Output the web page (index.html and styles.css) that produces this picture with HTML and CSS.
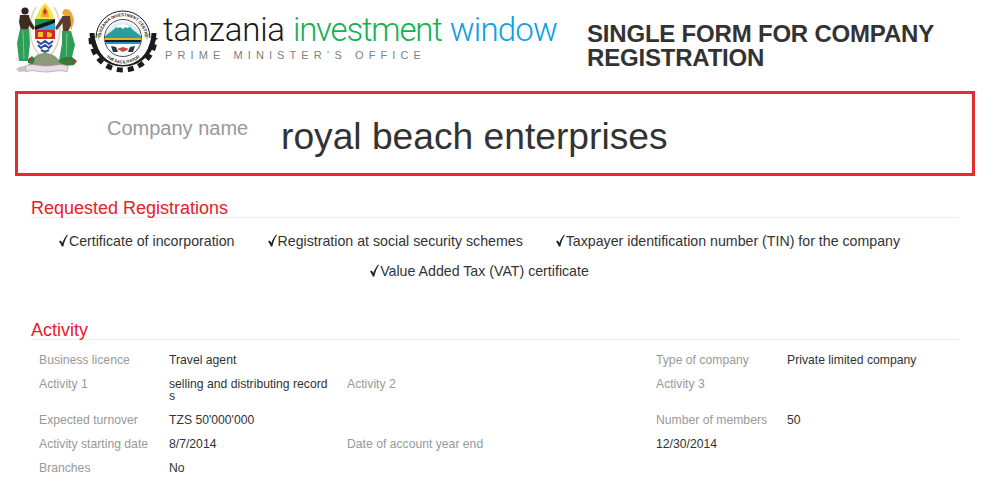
FILE: index.html
```html
<!DOCTYPE html>
<html lang="en">
<head>
  <meta charset="UTF-8">
  <title>Single form for company registration</title>
  <link rel="stylesheet" href="styles.css">
</head>
<body>

  <!--header-->
  <div class="header">
    <svg class="arms" width="65" height="72" viewBox="0 0 65 72">
      <!-- tusks -->
      <path d="M21 6C12 20 13 42 25 55" fill="none" stroke="#d9d4b8" stroke-width="1.4"/>
      <path d="M39 6C48 20 47 42 35 55" fill="none" stroke="#d9d4b8" stroke-width="1.4"/>
      <!-- shield -->
      <path d="M30 2C24 8 20 15 20 26V34C20 42 25 48 30 54C35 48 40 42 40 34V26C40 15 36 8 30 2Z" fill="#f3e63f"/>
      <path d="M26 16l1-6 3-5 3 5 1 6z" fill="#e9a92a"/>
      <path d="M28 11l2-4 2 4-2 3z" fill="#c9342b"/>
      <path d="M20 18H40V19L20 26Z" fill="#169a4c"/>
      <path d="M20 25L40 18V22L20 30Z" fill="#15181a"/>
      <path d="M20 29L40 22V29H20Z" fill="#2aa7df"/>
      <path d="M20 29H40V38H20Z" fill="#d9262c"/>
      <path d="M23 31h5v5h-5zM32 31c3 0 5 1 5 3s-3 3-5 2z" fill="#ecc42a"/>
      <path d="M20.500 38H39.500C38 45 34 50 30 54C26 50 22 45 20.500 38Z" fill="#fff"/>
      <path d="M22 40l4 3 4-3 4 3 4-3M23 44l3 3 4-3 4 3 3-3M26 49l4 2 4-2" fill="none" stroke="#2a4ea8" stroke-width="2"/>
      <!-- man -->
      <circle cx="10" cy="10" r="3.6" fill="#2f241c"/>
      <path d="M5 14H14L15 20L13 30H6L4 21Z" fill="#3f2c21"/>
      <path d="M13 15L20 27L18 29L10 20Z" fill="#3f2c21"/>
      <path d="M5 28H14L15 42L13 60H4L2 42Z" fill="#2c9e58"/>
      <path d="M8 30L9 58" stroke="#7cc592" stroke-width="1"/>
      <!-- woman -->
      <path d="M51 8C47 8 46 14 50 15C53 16 55 22 56 30L59 20C58 12 55 8 51 8Z" fill="#e9a93a"/>
      <path d="M47 15H55L56 24L53 31H48Z" fill="#5a3d2c"/>
      <path d="M47 16L40 27L42 29L50 19Z" fill="#5a3d2c"/>
      <path d="M47 30H56L60 44L56 60H44L47 42Z" fill="#2c9e58"/>
      <path d="M52 32L51 58" stroke="#7cc592" stroke-width="1"/>
      <!-- hill and scroll -->
      <path d="M16 60C20 54 25 52 30 52C35 52 40 54 45 60L48 66H12Z" fill="#8d9a77"/>
      <path d="M13 58l4-3 3 3-2 5-5-1zM43 60l6-4 8 0 5 4-3 4-10 1z" fill="#2f7f42"/>
      <path d="M52 57l2 1-1 2-2-1zM15 57l2 1-1 2-2-1zM58 60l2 1-1 2-2-1z" fill="#d9262c"/>
      <path d="M1 68C7 64 12 65 15 66L15 70L4 71Z" fill="#c9c7bb"/>
      <path d="M10 65C18 62 24 65 31 65C38 65 45 62 53 65L52 71C45 68 38 71 31 71C24 71 17 68 11 71Z" fill="#e7dfe6" stroke="#a99aa8" stroke-width=".7"/>
    </svg>

    <svg class="seal" width="70" height="68" viewBox="0 0 70 68">
      <!-- gear on lower half -->
      <path d="M3 32A32 32 0 0 0 67 32" fill="none" stroke="#1b1b1b" stroke-width="5" stroke-dasharray="6 5"/>
      <path d="M4 27A29 29 0 1 0 66 27" fill="none" stroke="#1b1b1b" stroke-width="5"/>
      <circle cx="35" cy="32" r="27" fill="#fff"/>
      <path d="M8 32A27 27 0 0 1 62 32" fill="none" stroke="#1b1b1b" stroke-width="1"/>
      <path id="sealTop" d="M14.400 40A22 22 0 1 1 55.600 40" fill="none"/>
      <path id="sealBottom" d="M13.700 46A25.500 25.500 0 0 0 56.300 46" fill="none"/>
      <text class="seal-text"><textPath href="#sealTop" startOffset="50%">TANZANIA INVESTMENT CENTRE</textPath></text>
      <text class="seal-text"><textPath href="#sealBottom" startOffset="50%">THE FACILITATOR</textPath></text>
      <circle cx="35" cy="32" r="18.500" fill="#fff" stroke="#1b1b1b" stroke-width=".8"/>
      <path d="M17 30A18.500 18.500 0 0 1 53 30Z" fill="#dfeef3"/>
      <path d="M17 30L25 24C29 20 32 18 35 18C39 18 42 20 45 24L53 30V33H17Z" fill="#2c9c9c"/>
      <path d="M28 21C31 17 39 17 42 21L39 22L37 21L35 23L32 21L30 22Z" fill="#fff"/>
      <path d="M16.500 32H53.500V34H16.500Z" fill="#e7b21c"/>
      <path d="M17 34H53V36H17Z" fill="#1b1b1b"/>
      <path d="M18 36H52V38H18Z" fill="#2a8fd0"/>
      <path d="M23 40l5 1 2 5h-5zM47 40l-5 1-2 5h5z" fill="#26364f"/>
      <path d="M29 43l6-2 6 2-6 3z" fill="#c94a4a"/>
      <path d="M9 28l3 0-1 6zM61 28l-3 0 1 6z" fill="#8aa63a"/>
    </svg>

    <div class="brand">
      <div class="brand-name"><span class="tz">tanzania</span> <span class="inv">investment</span> <span class="win">window</span></div>
      <div class="brand-sub">PRIME MINISTER’S OFFICE</div>
    </div>

    <h1 class="title">SINGLE FORM FOR COMPANY REGISTRATION</h1>
  </div>

  <!--company name-->
  <div class="company">
    <span class="company-label">Company name</span>
    <span class="company-value">royal beach enterprises</span>
  </div>

  <!--registrations-->
  <div class="section">
    <h2>Requested Registrations</h2>
    <div class="checks">
      <span class="check"><svg class="tick" width="11" height="13" viewBox="0 0 11 13"><path d="M1 7.500L2.800 6.400L4.300 9C5.300 6.200 7 3.200 9.200 .5L9.900 1C7.800 4.200 6.300 8.200 5.300 12.500H3.800C3.300 10.800 2.300 9 1 7.500Z" fill="#222"/></svg>Certificate of incorporation</span>
      <span class="check"><svg class="tick" width="11" height="13" viewBox="0 0 11 13"><path d="M1 7.500L2.800 6.400L4.300 9C5.300 6.200 7 3.200 9.200 .5L9.900 1C7.800 4.200 6.300 8.200 5.300 12.500H3.800C3.300 10.800 2.300 9 1 7.500Z" fill="#222"/></svg>Registration at social security schemes</span>
      <span class="check"><svg class="tick" width="11" height="13" viewBox="0 0 11 13"><path d="M1 7.500L2.800 6.400L4.300 9C5.300 6.200 7 3.200 9.200 .5L9.900 1C7.800 4.200 6.300 8.200 5.300 12.500H3.800C3.300 10.800 2.300 9 1 7.500Z" fill="#222"/></svg>Taxpayer identification number (TIN) for the company</span>
      <span class="check"><svg class="tick" width="11" height="13" viewBox="0 0 11 13"><path d="M1 7.500L2.800 6.400L4.300 9C5.300 6.200 7 3.200 9.200 .5L9.900 1C7.800 4.200 6.300 8.200 5.300 12.500H3.800C3.300 10.800 2.300 9 1 7.500Z" fill="#222"/></svg>Value Added Tax (VAT) certificate</span>
    </div>
  </div>

  <!--activity-->
  <div class="section activity">
    <h2>Activity</h2>
    <div class="fields">
      <span class="lbl">Business licence</span>
      <span class="val">Travel agent</span>
      <span class="lbl"></span>
      <span class="val"></span>
      <span class="lbl">Type of company</span>
      <span class="val">Private limited company</span>

      <span class="lbl">Activity 1</span>
      <span class="val">selling and distributing records</span>
      <span class="lbl">Activity 2</span>
      <span class="val"></span>
      <span class="lbl">Activity 3</span>
      <span class="val"></span>

      <span class="lbl">Expected turnover</span>
      <span class="val">TZS 50'000'000</span>
      <span class="lbl"></span>
      <span class="val"></span>
      <span class="lbl">Number of members</span>
      <span class="val">50</span>

      <span class="lbl">Activity starting date</span>
      <span class="val">8/7/2014</span>
      <span class="lbl wide">Date of account year end</span>
      <span class="val">12/30/2014</span>
      <span class="lbl"></span>

      <span class="lbl">Branches</span>
      <span class="val">No</span>
    </div>
  </div>

</body>
</html>
```

FILE: styles.css
```css
* {
  box-sizing: border-box;
}
body {
  margin: 0;
  background-color: #fff;
  color: #333;
  font-family: "Liberation Sans", Arial, sans-serif;
}

/* header */
.header {
  display: flex;
  align-items: flex-start;
  height: 91px;
  padding: 1px 0 0 15px;
}
.arms {
  flex: none;
}
.seal {
  flex: none;
  margin: 5px 0 0 8px;
}
.seal-text {
  font-size: 4.2px;
  font-weight: bold;
  fill: #222;
  text-anchor: middle;
}
.brand {
  flex: none;
  width: 424px;
  margin-left: 5px;
  padding-top: 11px;
}
.brand-name {
  font-family: Roboto, sans-serif;
  font-weight: 300;
  font-size: 33px;
  line-height: 36px;
  white-space: nowrap;
}
.tz {
  color: #1a1a1a;
  letter-spacing: -0.2px;
}
.inv {
  color: #12b14e;
  letter-spacing: -1.2px;
}
.win {
  color: #0d9ee6;
  letter-spacing: -0.8px;
}
.brand-sub {
  padding-left: 2px;
  font-size: 11px;
  line-height: 14px;
  letter-spacing: 5.1px;
  color: #808080;
  white-space: nowrap;
}
.title {
  margin: 21px 0 0 0;
  width: 370px;
  font-size: 24px;
  line-height: 24px;
  letter-spacing: -0.2px;
  font-weight: bold;
  color: #333;
}

/* company box */
.company {
  display: flex;
  align-items: flex-start;
  height: 85px;
  margin: 0 8px 0 15px;
  padding: 22px 0 0 89px;
  border: 3px solid #e52c2c;
}
.company-label {
  width: 174px;
  font-size: 20px;
  line-height: 24px;
  color: #999;
}
.company-value {
  font-size: 37.2px;
  line-height: 40px;
  color: #333;
}

/* sections */
.section {
  margin: 0 24px 0 31px;
  padding-top: 21px;
}
.section h2 {
  margin: 0;
  height: 21px;
  font-size: 18px;
  line-height: 22px;
  font-weight: normal;
  color: #e8202a;
  border-bottom: 1px solid #eee;
}
.checks {
  display: flex;
  flex-wrap: wrap;
  justify-content: center;
  align-content: flex-start;
  padding-top: 8px;
  height: 101px;
}
.check {
  height: 30px;
  margin-right: 32px;
  font-size: 14.2px;
  line-height: 30px;
}
.tick {
  vertical-align: -1px;
}
.activity {
  padding-top: 0;
}

.fields {
  display: grid;
  grid-template-columns: 130px 178px 131px 178px 131px 1fr;
  padding: 8px 0 0 8px;
  font-size: 12.2px;
  line-height: 12px;
}
.lbl, .val {
  padding: 6px 0;
}
.val {
  padding-right: 18px;
  word-break: break-all;
}
.lbl {
  color: #999;
  white-space: nowrap;
}
.wide {
  grid-column: span 2;
}
```
